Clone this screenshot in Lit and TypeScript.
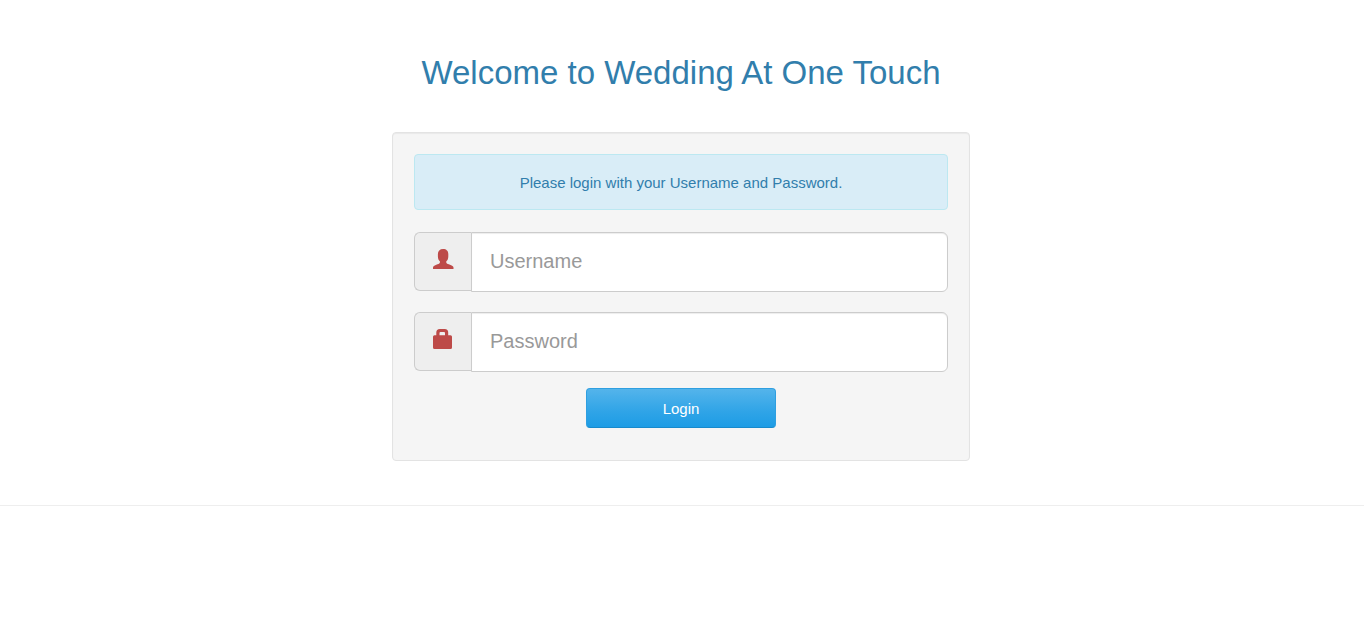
import { LitElement, html, css, svg } from "lit";
import { customElement } from "lit/decorators.js";

const userIcon = svg`<path d="M10.100 0C6.800 0 4.900 2 4.900 5V7.500C4.900 9.800 5.700 11.300 6.900 12.300V13.400C6.900 14.200 6 14.700 4.500 15.300C2 16.300 0 17 0 18.500V20H20.500V18.500C20.500 17 18.300 16.300 15.800 15.300C14.200 14.700 13.300 14.200 13.300 13.400V12.300C14.500 11.300 15.300 9.800 15.300 7.500V5C15.300 2 13.400 0 10.100 0Z"/>`;
const lockIcon = svg`<path fill-rule="evenodd" d="M3.300 6.300V3.500Q3.300 0 6.800 0H11.700Q15.200 0 15.200 3.500V6.300H17.500Q19 6.300 19 7.800V18.500Q19 20 17.500 20H1.500Q0 20 0 18.500V7.800Q0 6.300 1.500 6.300ZM6.500 6.300H12V4Q12 3 11 3H7.500Q6.500 3 6.500 4Z"/>`;

@customElement("app-root")
export class AppRoot extends LitElement {
  static styles = css`
    :host {
      display: block;
      font-family: "Liberation Sans", Arial, sans-serif;
      font-size: 15px;
      line-height: 22px;
      color: #317eac;
      background: #fff;
    }
    * {
      box-sizing: border-box;
    }
    .page {
      padding: 52px 2px 44px 0;
      border-bottom: 1px solid #eee;
    }
    h1 {
      margin: 0 0 38px;
      font-size: 33px;
      line-height: 42px;
      font-weight: 400;
      text-align: center;
    }
    .well {
      width: 578px;
      max-width: 100%;
      margin: 0 auto;
      padding: 21px 21px 32px;
      background: #f5f5f5;
      border: 1px solid #e3e3e3;
      border-radius: 4px;
      box-shadow: inset 0 1px 1px rgba(0, 0, 0, 0.05);
    }
    .notice {
      padding: 17px 16px 15px;
      margin-bottom: 22px;
      text-align: center;
      background: #d9edf7;
      border: 1px solid #bce8f1;
      border-radius: 4px;
    }
    .field {
      display: flex;
      align-items: flex-start;
      margin-bottom: 20px;
    }
    .field + .field {
      margin-bottom: 16px;
    }
    .addon {
      display: flex;
      padding: 16px 18px 0;
      width: 57px;
      height: 59px;
      background: #eee;
      border: 1px solid #ccc;
      border-right: 0;
      border-radius: 6px 0 0 6px;
    }
    .addon svg {
      flex: none;
      fill: #bd4a48;
    }
    input {
      flex: 1;
      min-width: 0;
      height: 60px;
      padding: 14px 18px 16px;
      font: inherit;
      font-size: 20px;
      color: #555;
      background: #fff;
      border: 1px solid #ccc;
      border-radius: 0 6px 6px 0;
      box-shadow: inset 0 1px 1px rgba(0, 0, 0, 0.075);
    }
    input::placeholder {
      color: #999;
      opacity: 1;
    }
    button {
      display: block;
      width: 190px;
      height: 40px;
      margin: 0 auto;
      padding: 2px 0 0;
      font: inherit;
      color: #fff;
      background: linear-gradient(#54b4eb, #2fa4e7 60%, #1d9ce5);
      border: 1px solid #2f9fe0;
      border-bottom-color: #178acc;
      border-radius: 4px;
    }
  `;

  render() {
    return html`
      <main class="page">
        <h1>Welcome to Wedding At One Touch</h1>
        <form class="well">
          <div class="notice">Please login with your Username and Password.</div>
          <div class="field">
            <label class="addon" for="username" aria-label="Username">
              <svg width="21" height="20" viewBox="0 0 21 20">${userIcon}</svg>
            </label>
            <input id="username" type="text" placeholder="Username" />
          </div>
          <div class="field">
            <label class="addon" for="password" aria-label="Password">
              <svg width="21" height="20" viewBox="0 0 21 20">${lockIcon}</svg>
            </label>
            <input id="password" type="password" placeholder="Password" />
          </div>
          <button type="submit">Login</button>
        </form>
      </main>
    `;
  }
}
